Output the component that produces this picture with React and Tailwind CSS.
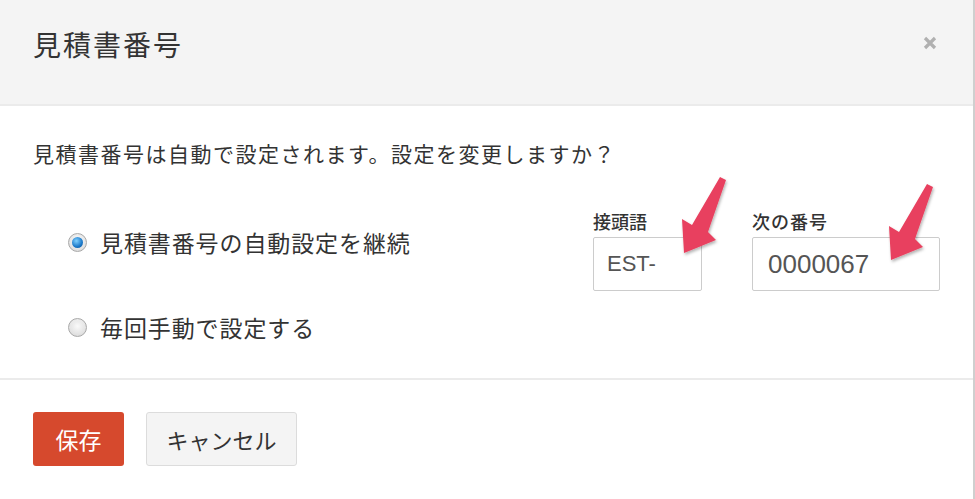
import { useState } from "react"

const Arrow = ({ className }) => (
    <svg className={className} width="52" height="84" viewBox="0 0 52 84">
        <defs>
            <filter id="sh" x="-30%" y="-30%" width="160%" height="160%">
                <feDropShadow dx="1" dy="2" stdDeviation="1.5" floodColor="#000" floodOpacity="0.3" />
            </filter>
        </defs>
        <polygon
            points="39,1 45,4 27,56 35,64 3,77 1,43 11,49"
            fill="#e8405e"
            filter="url(#sh)"
        />
    </svg>
)

const Radio = ({ checked }) => (
    <span className="w-[19px] h-[19px] rounded-full border border-[#a9a9a9] bg-[radial-gradient(circle_at_50%_40%,#ffffff,#d2d2d2)] flex items-center justify-center shrink-0">
        {checked ? (
            <span className="w-[11px] h-[11px] rounded-full bg-[radial-gradient(circle_at_40%_35%,#7fd0ff,#1b78c8_60%,#0c4f92)]" />
        ) : (
            <span className="w-[13px] h-[13px] rounded-full bg-[radial-gradient(circle_at_50%_40%,#fafafa,#dcdcdc)]" />
        )}
    </span>
)

export default function App() {
    const [mode, setMode] = useState("auto")

    return (
        <div className="relative w-[975px] h-[499px] bg-white border-r-2 border-[#cfcfcf] text-[#333]" style={{ fontFamily: '"Noto Sans CJK JP", sans-serif' }}>
            <header className="h-[106px] bg-[#f4f4f4] border-b-2 border-[#ebebeb] flex items-start justify-between pl-[33px] pr-[36px] pt-[26px]">
                <h1 className="text-[28px] leading-[36px] tracking-[2px]">見積書番号</h1>
                <button className="mt-[10px]">
                    <svg width="14" height="14" viewBox="0 0 14 14">
                        <path d="M2 2 L12 12 M12 2 L2 12" stroke="#b0b0b0" strokeWidth="3.2" />
                    </svg>
                </button>
            </header>

            <section className="h-[274px] border-b-2 border-[#ebebeb] pl-[33px] pt-[32px]">
                <p className="text-[21px] leading-[30px] tracking-[1.5px]">見積書番号は自動で設定されます。設定を変更しますか？</p>

                <div className="flex mt-[41px]">
                    <div className="flex flex-col pl-[35px] pt-[18px] gap-[55px] w-[560px]">
                        <label className="flex items-center gap-[13px] h-[30px] cursor-pointer" onClick={() => setMode("auto")}>
                            <Radio checked={mode === "auto"} />
                            <span className="text-[23px] leading-[30px] tracking-[0.9px]">見積書番号の自動設定を継続</span>
                        </label>
                        <label className="flex items-center gap-[13px] h-[30px] cursor-pointer" onClick={() => setMode("manual")}>
                            <Radio checked={mode === "manual"} />
                            <span className="text-[23px] leading-[30px] tracking-[0.9px]">毎回手動で設定する</span>
                        </label>
                    </div>

                    <div className="flex flex-col w-[159px]">
                        <span className="text-[18px] leading-[24px] font-medium">接頭語</span>
                        <input className="mt-[4px] w-[109px] h-[54px] border border-[#cccccc] rounded-[2px] px-[13px] text-[22px] text-[#555] outline-none" style={{ fontFamily: '"Liberation Sans", sans-serif' }} defaultValue="EST-" />
                    </div>
                    <div className="flex flex-col">
                        <span className="text-[18px] leading-[24px] font-medium tracking-[1px]">次の番号</span>
                        <input className="mt-[4px] w-[188px] h-[54px] border border-[#cccccc] rounded-[2px] px-[15px] text-[26px] text-[#555] outline-none" style={{ fontFamily: '"Liberation Sans", sans-serif' }} defaultValue="0000067" />
                    </div>
                </div>
            </section>

            <footer className="flex gap-[22px] pl-[33px] pt-[32px]">
                <button className="w-[91px] h-[54px] rounded-[3px] bg-[#d6492d] text-white text-[23px]">保存</button>
                <button className="w-[151px] h-[54px] rounded-[3px] bg-[#f4f4f4] border border-[#dcdcdc] text-[#333] text-[22px]">キャンセル</button>
            </footer>

            <Arrow className="absolute left-[681px] top-[176px]" />
            <Arrow className="absolute left-[888px] top-[183px]" />
        </div>
    )
}
